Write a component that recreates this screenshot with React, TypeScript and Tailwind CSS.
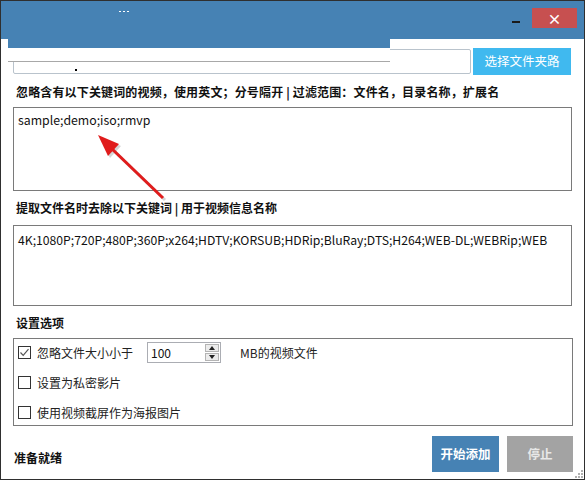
import React from 'react';

function CheckRow({ checked, label, children }: { checked?: boolean; label: string; children?: React.ReactNode }) {
  return (
    <div className="flex h-[21px] items-center">
      <div className="flex h-[13px] w-[13px] items-center justify-center border border-[#333333] bg-white">
        {checked && (
          <svg width="11" height="11" viewBox="0 0 11 11">
            <path d="M1.5 5.5 L4.2 8.3 L9.5 2.2" fill="none" stroke="#555555" strokeWidth="1.2" />
          </svg>
        )}
      </div>
      <span className="ml-[6px] text-[12px] leading-none text-[#222222]">{label}</span>
      {children}
    </div>
  );
}

export default function App() {
  return (
    <div className="relative flex h-[480px] w-[585px] flex-col overflow-hidden border border-[#2f2f2f] bg-white font-['Noto_Sans_CJK_SC',sans-serif] text-black">
      {/* title bar */}
      <div className="flex h-[38px] shrink-0 items-start justify-end bg-[#4682b4]">
        <div className="mr-[12px] mt-[20px] h-[2px] w-[8px] bg-[#1a1a1a]" />
        <div className="mr-[7px] mt-[7px] flex h-[20px] w-[45px] items-center justify-center bg-[#c75050] text-[14px] font-bold leading-none text-white">
          ×
        </div>
      </div>

      {/* path row */}
      <div className="mt-[9px] flex items-start pl-[12px]">
        <div className="relative mt-[1px] h-[25px] w-[458px] rounded-[2px] border border-[#b9c3cc] bg-white">
          <div className="absolute left-[61px] top-[19px] h-[2px] w-[2px] bg-black" />
        </div>
        <div className="ml-[2px] flex h-[27px] w-[98px] items-center justify-center bg-[#40b9ef] text-[12.5px] leading-none text-white">
          选择文件夹路
        </div>
      </div>

      <div className="ml-[15px] mt-[9px] h-[16px] text-[12px] font-bold leading-[16px] tracking-[0.15px] text-[#111111]">
        忽略含有以下关键词的视频，使用英文；分号隔开 | 过滤范围：文件名，目录名称，扩展名
      </div>

      <div className="ml-[12px] mt-[7px] h-[84px] w-[559px] border border-[#7a7a7a] px-[4px] pt-[4px] text-[12.3px] leading-[16px] text-[#111111]">
        sample;demo;iso;rmvp
      </div>

      <div className="ml-[15px] mt-[9px] h-[16px] text-[12px] font-bold leading-[16px] text-[#111111]">
        提取文件名时去除以下关键词 | 用于视频信息名称
      </div>

      <div className="ml-[12px] mt-[9px] h-[81px] w-[559px] border border-[#7a7a7a] px-[4px] pt-[6px] text-[12.2px] leading-[16px] text-[#111111]">
        4K;1080P;720P;480P;360P;x264;HDTV;KORSUB;HDRip;BluRay;DTS;H264;WEB-DL;WEBRip;WEB
      </div>

      <div className="ml-[15px] mt-[9px] h-[16px] text-[12px] font-bold leading-[16px] text-[#111111]">设置选项</div>

      <div className="ml-[12px] mt-[7px] flex h-[88px] w-[560px] flex-col gap-[9px] border border-[#7a7a7a] pl-[4px] pt-[3px]">
        <CheckRow checked label="忽略文件大小小于">
          <div className="ml-[14px] flex h-[21px] w-[74px] items-center justify-between border border-[#abadb3] pl-[3px] pr-[1px]">
            <span className="text-[12px] leading-none text-[#111111]">100</span>
            <div className="flex h-[17px] w-[14px] flex-col gap-[1px]">
              <div className="flex h-[8px] items-center justify-center border border-[#b4b4b4] bg-[#ececec]">
                <svg width="6" height="4" viewBox="0 0 6 4"><path d="M0 4 L3 0 L6 4 Z" fill="#222" /></svg>
              </div>
              <div className="flex h-[8px] items-center justify-center border border-[#b4b4b4] bg-[#ececec]">
                <svg width="6" height="4" viewBox="0 0 6 4"><path d="M0 0 L3 4 L6 0 Z" fill="#222" /></svg>
              </div>
            </div>
          </div>
          <span className="ml-[19px] text-[12px] leading-none text-[#222222]">MB的视频文件</span>
        </CheckRow>
        <CheckRow label="设置为私密影片" />
        <CheckRow label="使用视频截屏作为海报图片" />
      </div>

      <div className="mt-[10px] flex items-start">
        <div className="ml-[13px] mt-[14px] text-[12px] font-bold leading-[16px] text-[#111111]">准备就绪</div>
        <div className="ml-auto flex h-[36px] w-[67px] items-center justify-center bg-[#4682b4] text-[12.5px] font-bold leading-none text-white">
          开始添加
        </div>
        <div className="ml-[8px] mr-[11px] flex h-[36px] w-[66px] items-center justify-center bg-[#a3a3a3] text-[12.5px] font-bold leading-none text-[#e8e8e8]">
          停止
        </div>
      </div>

      {/* redaction overlays on the title area */}
      <div className="absolute left-[7px] top-[11px] h-[36px] w-[382px] bg-[#4682b4]" />
      <div className="absolute left-[7px] top-[47px] h-[14px] w-[382px] border-b border-[#a8a8a8] bg-white" />
      <div className="absolute left-[118px] top-[10px] flex gap-[2px]">
        <div className="h-[1px] w-[2px] bg-white" />
        <div className="h-[1px] w-[2px] bg-white" />
        <div className="h-[1px] w-[2px] bg-white" />
      </div>

      {/* annotation arrow */}
      <svg className="pointer-events-none absolute left-0 top-0" width="585" height="480" viewBox="0 0 585 480">
        <g transform="translate(-1,-1)">
          <line x1="163" y1="198" x2="108" y2="145" stroke="#888" strokeOpacity="0.35" strokeWidth="3" transform="translate(2,2)" />
          <polygon points="98,135 119,144 108,156" fill="#888" fillOpacity="0.35" transform="translate(2,2)" />
          <line x1="163" y1="198" x2="110" y2="147" stroke="#e01c1c" strokeWidth="3" />
          <polygon points="98,135 119,144 108,156" fill="#e01c1c" />
        </g>
      </svg>

      {/* resize grip */}
      <div className="absolute bottom-[1px] right-[1px] grid grid-cols-3 gap-[1px]">
        <div className="h-[2px] w-[2px]" />
        <div className="h-[2px] w-[2px]" />
        <div className="h-[2px] w-[2px] bg-[#b0b0b0]" />
        <div className="h-[2px] w-[2px]" />
        <div className="h-[2px] w-[2px] bg-[#b0b0b0]" />
        <div className="h-[2px] w-[2px] bg-[#b0b0b0]" />
        <div className="h-[2px] w-[2px] bg-[#b0b0b0]" />
        <div className="h-[2px] w-[2px] bg-[#b0b0b0]" />
        <div className="h-[2px] w-[2px] bg-[#b0b0b0]" />
      </div>
    </div>
  );
}
